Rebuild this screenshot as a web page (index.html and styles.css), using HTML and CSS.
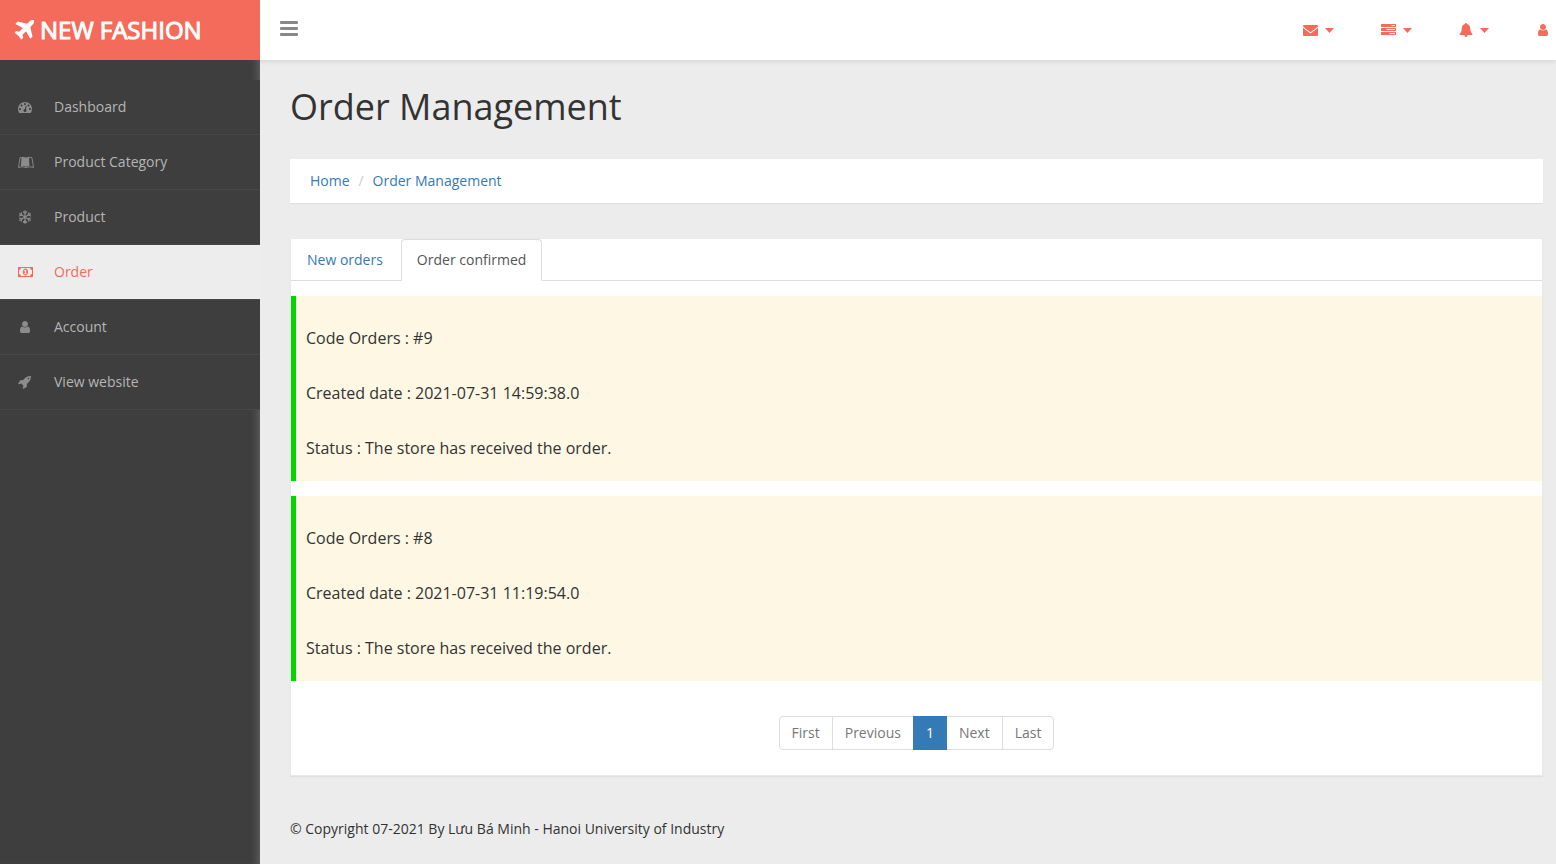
FILE: index.html
```html
<!DOCTYPE html>
<html lang="en">
<head>
<meta charset="utf-8">
<title>Order Management</title>
<link rel="stylesheet" href="styles.css">
</head>
<body>
<svg class="sprite" aria-hidden="true">
  <symbol id="user" viewBox="0 0 1792 1792"><path d="M1536 1399q0 109-62.500 187t-150.500 78h-854q-88 0-150.500-78t-62.500-187q0-85 8.500-160.500t31.500-152 58.500-131 94-89 134.500-34.500q131 128 313 128t313-128q76 0 134.500 34.500t94 89 58.500 131 31.500 152 8.500 160.500zm-256-887q0 159-112.500 271.500t-271.500 112.500-271.500-112.500-112.500-271.500 112.500-271.500 271.500-112.500 271.500 112.500 112.500 271.500z"/></symbol>
  <symbol id="caret" viewBox="0 0 9 5"><path d="M0 0h9L4.500 5z"/></symbol>
</svg>
<header class="topbar">
  <a class="brand" href="#">
    <svg class="brand-icon" viewBox="0 0 1792 1792"><path d="M1568 160q44 52 12 148t-108 172l-161 161 160 696q5 19-12 33l-128 96q-7 6-19 6-4 0-7-1-15-3-21-16l-279-508-259 259 53 194q5 17-8 31l-96 96q-9 9-23 9h-2q-15-2-24-13l-189-252-252-189q-11-7-13-23-1-13 9-25l96-97q9-9 23-9 6 0 8 1l194 53 259-259-508-279q-14-8-17-24-2-16 9-27l128-128q14-13 30-8l665 159 160-160q76-76 172-108t148 12z"/></svg>
    <span>NEW FASHION</span>
  </a>
  <button class="toggle" type="button" aria-label="Toggle menu">
    <svg viewBox="0 0 18 15"><rect y="0" width="18" height="3" rx="1"/><rect y="6" width="18" height="3" rx="1"/><rect y="12" width="18" height="3" rx="1"/></svg>
  </button>
  <div class="tools">
    <button type="button" aria-label="Messages">
      <svg class="icon-wide" viewBox="0 0 15 14"><path d="M1 2h13q1 0 1 1v.5Q12 6.200 7.500 9.300 3 6.200 0 3.500V3q0-1 1-1zM0 4.800Q3.500 7.800 7.500 10.500 11.500 7.800 15 4.800V12q0 1-1 1H1q-1 0-1-1z"/></svg>
      <svg class="caret"><use href="#caret"/></svg>
    </button>
    <button type="button" aria-label="Tasks">
      <svg class="icon-wide" viewBox="0 0 15 14"><path fill-rule="evenodd" d="M.5 1h14q.5 0 .5.500v2q0 .5-.5.500H.5Q0 4 0 3.500v-2Q0 1 .5 1zM10.500 2v1H14V2zM.5 5h14q.5 0 .5.500v2q0 .5-.5.500H.5Q0 8 0 7.500v-2Q0 5 .5 5zM5.500 6v1H14V6zM.5 9h14q.5 0 .5.500v2q0 .5-.5.500H.5q-.5 0-.5-.500v-2Q0 9 .5 9zM8.500 10v1H14v-1z"/></svg>
      <svg class="caret"><use href="#caret"/></svg>
    </button>
    <button type="button" aria-label="Notifications">
      <svg class="icon" viewBox="0 0 14 14"><path d="M6 1q0-1 1-1t1 1q3 .6 3.200 4.500Q11.300 9.500 13.500 11q0 1-1 1h-4Q8.500 14 7 14T5.500 12h-4q-1 0-1-1Q2.700 9.500 2.800 5.500 3 1.600 6 1z"/></svg>
      <svg class="caret"><use href="#caret"/></svg>
    </button>
    <button type="button" aria-label="Profile"><svg class="icon"><use href="#user"/></svg></button>
  </div>
</header>
<div class="shell">
  <nav class="sidebar">
    <ul class="menu">
      <li><a href="#"><svg viewBox="0 0 1792 1792"><path d="M384 1152q0-53-37.500-90.500t-90.500-37.500-90.500 37.500-37.500 90.500 37.500 90.500 90.500 37.500 90.500-37.500 37.500-90.500zm192-448q0-53-37.500-90.500t-90.500-37.500-90.500 37.500-37.500 90.500 37.500 90.500 90.500 37.500 90.500-37.500 37.500-90.500zm428 481l101-382q6-26-7.500-48.500t-38.500-29.500-48 6.500-30 39.500l-101 382q-60 5-107 43.500t-63 98.500q-20 77 20 146t117 89 146-20 89-117q16-60-6-117t-72-91zm660-33q0-53-37.500-90.500t-90.500-37.500-90.500 37.500-37.500 90.500 37.500 90.500 90.500 37.500 90.500-37.500 37.500-90.500zm-640-640q0-53-37.500-90.500t-90.500-37.500-90.500 37.500-37.500 90.500 37.500 90.500 90.500 37.500 90.500-37.500 37.500-90.500zm448 192q0-53-37.500-90.500t-90.500-37.500-90.500 37.500-37.500 90.500 37.500 90.500 90.500 37.500 90.500-37.500 37.500-90.500zm320 448q0 261-141 483-19 29-54 29h-1402q-35 0-54-29-141-221-141-483 0-182 71-348t191-286 286-191 348-71 348 71 286 191 191 286 71 348z"/></svg>Dashboard</a></li>
      <li><a href="#"><svg viewBox="0 0 14 14"><path d="M3.500 3q2.500-1 4.500.2Q9.500 2.300 11 2.500l.4 8.500Q9.500 11 8 11.800 6 10.500 2.800 11.500z"/><path fill="none" stroke="currentColor" stroke-width=".9" d="M8 3q3-1.300 6-.2l1.500 9.700Q11.500 11 8 12.500 4 11 .5 12.500L2 2.800Q5 1.700 8 3z"/></svg>Product Category</a></li>
      <li><a href="#"><svg viewBox="0 0 14 14"><path fill="none" stroke="currentColor" stroke-width="1.200" d="M7 .2v13.600M1.200 3.600l11.600 6.800M1.200 10.400l11.600-6.800M5 1.500l2 2 2-2M5 12.500l2-2 2 2M1 6l2.900-.8L3.100 2.500M13 8l-2.900.8.800 2.700M1 8l2.900.8-.8 2.700M13 6l-2.900-.8.800-2.700"/></svg>Product</a></li>
      <li class="active"><a href="#"><svg viewBox="0 0 14 14"><path fill-rule="evenodd" d="M0 2h15v10H0zM3 3Q3 5 1 5v4q2 0 2 2h9q0-2 2-2V5q-2 0-2-2z"/><path fill-rule="evenodd" d="M7.500 3.500c3.500 0 3.500 7 0 7s-3.500-7 0-7zM7 4.800l-1.200.9.500.6.500-.3v2.500H6v.8h3v-.8h-.8V4.800z"/></svg>Order</a></li>
      <li><a href="#"><svg><use href="#user"/></svg>Account</a></li>
      <li><a href="#"><svg viewBox="0 0 1792 1792"><path d="M1440 448q0-40-28-68t-68-28-68 28-28 68 28 68 68 28 68-28 28-68zm224-288q0 249-75.500 430.500t-253.500 360.500q-81 80-195 176l-20 379q-2 16-16 26l-384 224q-7 4-16 4-12 0-23-9l-64-64q-13-14-8-32l85-276-281-281-276 85q-3 1-9 1-14 0-23-9l-64-64q-17-19-5-39l224-384q10-14 26-16l379-20q96-114 176-195 188-187 358-258t431-71q14 0 24 9.500t10 22.500z"/></svg>View website</a></li>
    </ul>
  </nav>
  <main class="content">
    <h1>Order Management</h1>
    <nav class="card crumbs" aria-label="Breadcrumb">
      <a href="#">Home</a><span class="slash">/</span><a href="#">Order Management</a>
    </nav>
    <section class="card panel">
      <div class="tabs" role="tablist">
        <button type="button" role="tab" aria-selected="false">New orders</button>
        <button type="button" role="tab" aria-selected="true">Order confirmed</button>
      </div>
      <article class="order">
        <p>Code Orders : #9</p>
        <p>Created date : 2021-07-31 14:59:38.0</p>
        <p>Status : The store has received the order.</p>
      </article>
      <article class="order">
        <p>Code Orders : #8</p>
        <p>Created date : 2021-07-31 11:19:54.0</p>
        <p>Status : The store has received the order.</p>
      </article>
      <nav class="pages" aria-label="Pages">
        <a href="#">First</a><a href="#">Previous</a><a class="current" href="#" aria-current="page">1</a><a href="#">Next</a><a href="#">Last</a>
      </nav>
    </section>
    <footer>© Copyright 07-2021 By Lưu Bá Minh - Hanoi University of Industry</footer>
  </main>
</div>
</body>
</html>
```

FILE: styles.css
```css
* { box-sizing: border-box; }
body {
  margin: 0;
  min-height: 100vh;
  display: flex;
  flex-direction: column;
  background: #ececec;
  color: #333;
  font: 14px/20px "Open Sans", sans-serif;
}
a { color: #337ab7; text-decoration: none; }
button { border: 0; padding: 0; background: none; font: inherit; color: inherit; cursor: pointer; }
svg { fill: currentColor; flex: none; }
.sprite { display: none; }

.topbar {
  height: 60px;
  display: flex;
  align-items: center;
  background: #fff;
  box-shadow: 0 0 6px rgba(0, 0, 0, .15);
}
.brand {
  width: 260px;
  height: 60px;
  padding-left: 12px;
  display: flex;
  align-items: center;
  gap: 3px;
  background: #f56b5b;
  color: #fff;
  font-size: 24px;
  line-height: 60px;
  font-weight: 400;
  -webkit-text-stroke: 1px #fff;
}
.brand-icon { width: 25px; height: 25px; }
.toggle { margin-left: 20px; padding-bottom: 3px; color: #888; display: flex; }
.toggle svg { width: 18px; height: 15px; }
.tools { margin-left: auto; padding-right: 6px; display: flex; gap: 47px; color: #f56b5b; }
.tools button { display: flex; align-items: center; gap: 7px; }
.icon { width: 14px; height: 14px; }
.icon-wide { width: 15px; height: 14px; }
.caret { width: 9px; height: 5px; }

.shell { flex: 1; display: flex; }
.sidebar {
  width: 260px;
  padding-top: 20px;
  background: #3e3e3e;
  box-shadow: inset -8px 0 8px -6px rgba(255, 255, 255, .2);
}
.menu { list-style: none; margin: 0; padding: 0; }
.menu a {
  height: 55px;
  padding: 0 18px;
  display: flex;
  align-items: center;
  gap: 22px;
  background: #3e3e3e;
  color: #b5b5b5;
  border-bottom: 1px solid #484848;
}
.menu svg { width: 14px; height: 14px; color: #8c8c8c; overflow: visible; }
.menu .active a { background: #ededed; color: #f56b5b; border-bottom-color: #484848; }
.menu .active svg { color: #f56b5b; }

.content { flex: 1; min-width: 0; padding: 20px 13px 25px 30px; }
h1 { margin: 0; font-size: 36px; line-height: 54px; font-weight: 400; }
.card { background: #fff; box-shadow: 0 1px 1px rgba(0, 0, 0, .05); }
.crumbs { height: 44px; margin-top: 25px; padding: 0 20px; display: flex; align-items: center; }
.slash { width: 23px; text-align: center; color: #ccc; }
.panel { margin-top: 35px; padding-bottom: 25px; border: 1px solid #e9e9e9; }
.tabs { display: flex; border-bottom: 1px solid #ddd; }
.tabs button {
  height: 42px;
  margin-bottom: -1px;
  padding: 0 15px;
  border: 1px solid transparent;
  color: #337ab7;
}
.tabs button + button { margin-left: 2px; }
.tabs button[aria-selected="true"] {
  background: #fff;
  border-color: #ddd #ddd #fff;
  border-radius: 4px 4px 0 0;
  color: #555;
}
.order {
  margin-top: 15px;
  padding: 15px 10px 5px;
  border-left: 5px solid #00d600;
  background: #fdf7e3;
  font-size: 16px;
}
.order p { margin: 0; line-height: 55px; }
.pages { margin-top: 35px; display: flex; justify-content: center; }
.pages a { padding: 6px 12px; border: 1px solid #ddd; color: #777; }
.pages a + a { margin-left: -1px; }
.pages a:first-child { border-radius: 4px 0 0 4px; }
.pages a:last-child { border-radius: 0 4px 4px 0; }
.pages .current { z-index: 1; background: #337ab7; border-color: #337ab7; color: #fff; }
footer { margin-top: 43px; }
```
